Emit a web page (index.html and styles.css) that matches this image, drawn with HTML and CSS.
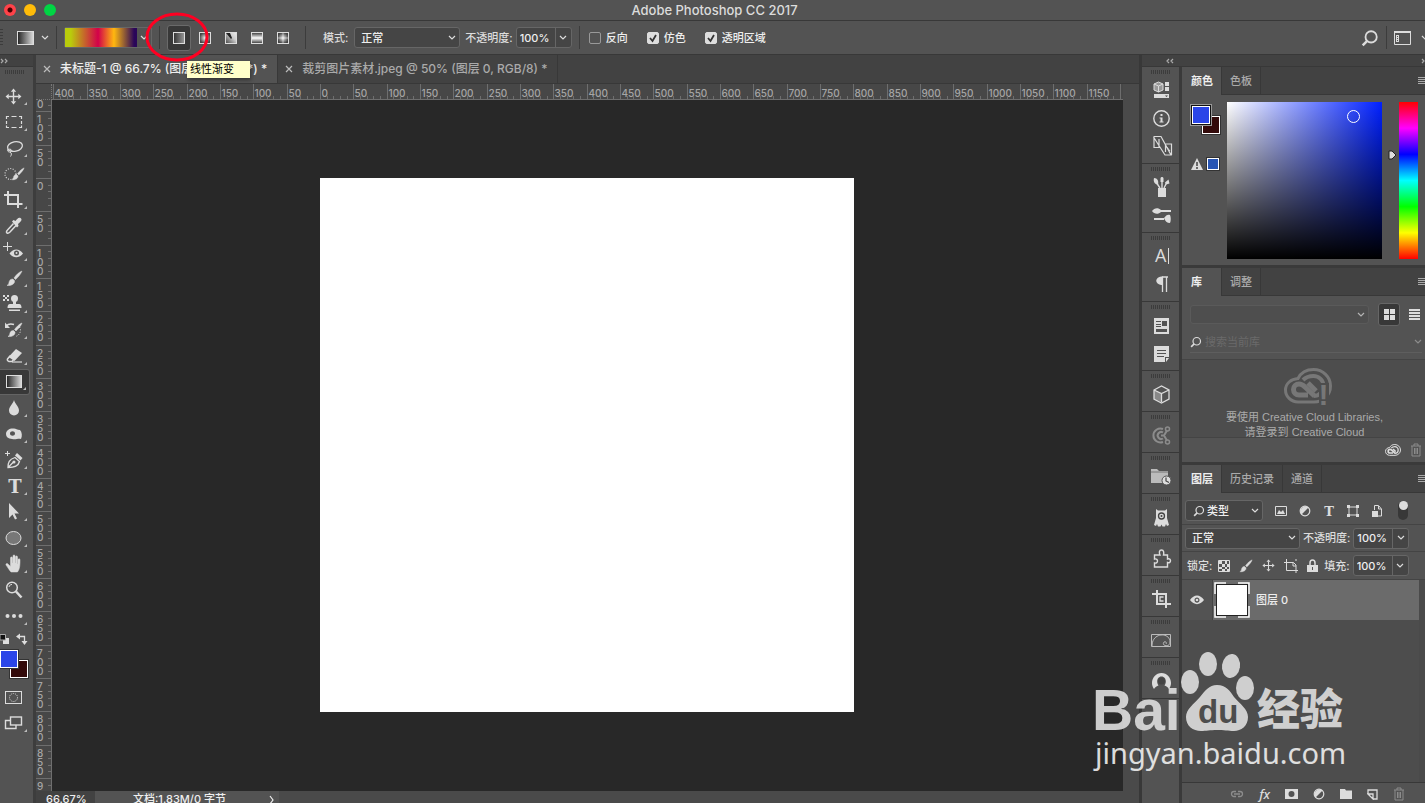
FILE: index.html
```html
<!DOCTYPE html>
<html lang="zh-CN">
<head>
    <meta charset="UTF-8">
    <meta name="viewport" content="width=device-width, initial-scale=1.0">
    <title>Adobe Photoshop CC 2017</title>
    <link rel="stylesheet" href="styles.css">
</head>
<body>
<!-- shared icons -->
<svg class="defs" aria-hidden="true">
    <defs>
        <linearGradient id="g-linear"><stop offset="0" stop-color="#222"/><stop offset="1" stop-color="#ddd"/></linearGradient>
        <linearGradient id="g-type"><stop offset="0" stop-color="#333"/><stop offset="1" stop-color="#999"/></linearGradient>
        <radialGradient id="g-radial"><stop offset="0" stop-color="#eee"/><stop offset="1" stop-color="#444"/></radialGradient>
        <linearGradient id="g-mirror" x2="0" y2="1"><stop offset="0" stop-color="#333"/><stop offset=".5" stop-color="#fff"/><stop offset="1" stop-color="#333"/></linearGradient>
        <linearGradient id="g-angle" x1="0" y1="1" x2="1" y2="0"><stop offset="0" stop-color="#444"/><stop offset=".6" stop-color="#ccc"/><stop offset="1" stop-color="#eee"/></linearGradient>
    </defs>
    <symbol id="chevron" viewBox="0 0 8 6"><path d="M1 1l3 3 3-3" fill="none" stroke="currentColor" stroke-width="1.2"/></symbol>
    <symbol id="search" viewBox="0 0 16 16"><circle cx="9" cy="7" r="5" fill="none" stroke="currentColor" stroke-width="1.6"/><path d="M5.500 10.500L1.500 14.500" stroke="currentColor" stroke-width="2.200"/></symbol>
    <symbol id="menu" viewBox="0 0 10 10"><path d="M0 1.500h10M0 3.500h10M0 5.500h10M0 7.500h10" stroke="currentColor"/></symbol>
    <symbol id="close" viewBox="0 0 8 8"><path d="M1 1l6 6M7 1L1 7" stroke="currentColor" stroke-width="1.200"/></symbol>
    <symbol id="double" viewBox="0 0 8 6"><path d="M1 1l2 2-2 2M5 1l2 2-2 2" fill="none" stroke="currentColor" stroke-width="1.200"/></symbol>
    <symbol id="brush" viewBox="0 0 16 16"><path d="M15 1c-1 3-4 6-6 8L7.500 7.500C9.500 5 12 2 15 1zM6.500 8.500L8 10c.5 3-3 5-7 4.500 2-1 1.500-2 2-3.500.5-1.800 2-2.500 3.500-2.500z" stroke="currentColor" stroke-width=".5"/></symbol>
    <symbol id="move" viewBox="0 0 16 16"><path d="M8 .5l2.500 3H5.500zM8 15.500l2.500-3H5.500zM.5 8l3-2.500v5zM15.500 8l-3-2.500v5z"/><path d="M8 3v10M3 8h10" stroke="currentColor" stroke-width="1.300"/></symbol>
    <symbol id="adjust" viewBox="0 0 12 12"><circle cx="6" cy="6" r="4.800" fill="none" stroke="currentColor" stroke-width="1.200"/><path d="M9.500 2.500A5 5 0 0 0 2.500 9.500z"/></symbol>
    <symbol id="trash" viewBox="0 0 12 14"><path d="M1 3h10M4 3V1h4v2M2 3v10h8V3M4.500 5v6M6 5v6M7.500 5v6" fill="none" stroke="currentColor"/></symbol>
    <symbol id="cloud" viewBox="0 0 48 36"><path d="M14 34C7 34 1.500 28.500 1.500 22S7 11 14 10.500C17 4.500 22 1.500 29.500 1.500 39 1.500 46.500 9 46.500 18S39 34 30 34z" fill="none" stroke="currentColor" stroke-width="3"/><path d="M24 27H15a5.500 5.500 0 0 1 0-11c3 0 4 1 6 3l9.500 9" fill="none" stroke="currentColor" stroke-width="5"/><path d="M19 12c3-3 6-4 10.500-4a10 10 0 0 1 0 20" fill="none" stroke="currentColor" stroke-width="4"/><path d="M24 15l8 8" stroke="currentColor" stroke-width="5"/></symbol>
</svg>

<header class="titlebar">
    <span class="light light-close"></span>
    <span class="light light-min"></span>
    <span class="light light-zoom"></span>
    <h1>Adobe Photoshop CC 2017</h1>
</header>

<section class="options">
    <span class="grip-v"></span>
    <button class="tool-preset" aria-label="渐变工具">
        <svg width="17" height="14" viewBox="0 0 17 14"><rect x=".5" y=".5" width="16" height="13" fill="url(#g-linear)" stroke="#ddd"/></svg>
        <svg class="chev" width="8" height="6"><use href="#chevron"/></svg>
    </button>
    <span class="divider"></span>
    <div class="gradient-picker">
        <button class="gradient-bar" aria-label="编辑渐变"></button>
        <button class="gradient-more" aria-label="渐变列表"><svg width="8" height="6"><use href="#chevron"/></svg></button>
    </div>
    <span class="divider"></span>
    <div class="gradient-types">
        <button class="type active" aria-label="线性渐变"><svg width="12" height="12"><rect x=".5" y=".5" width="11" height="11" fill="url(#g-type)" stroke="#ddd"/></svg></button>
        <button class="type" aria-label="径向渐变"><svg width="12" height="12"><rect x=".5" y=".5" width="11" height="11" fill="url(#g-radial)" stroke="#ddd"/></svg></button>
        <button class="type" aria-label="角度渐变"><svg width="12" height="12"><rect x=".5" y=".5" width="11" height="11" fill="url(#g-angle)" stroke="#ddd"/><path d="M1 1h4l2 5-1 1z" fill="#222"/></svg></button>
        <button class="type" aria-label="对称渐变"><svg width="12" height="12"><rect x=".5" y=".5" width="11" height="11" fill="url(#g-mirror)" stroke="#ddd"/></svg></button>
        <button class="type" aria-label="菱形渐变"><svg width="12" height="12"><rect x=".5" y=".5" width="11" height="11" fill="url(#g-radial)" stroke="#ddd"/><path d="M6 1v10M1 6h10" stroke="#fff" opacity=".5"/></svg></button>
    </div>
    <span class="divider"></span>
    <label for="mode" class="mode-label">模式:</label>
    <select id="mode" class="select mode-select"><option>正常</option></select>
    <label for="opacity">不透明度:</label>
    <span class="combo">
        <input id="opacity" type="text" value="100%">
        <button aria-label="不透明度滑块"><svg width="8" height="6"><use href="#chevron"/></svg></button>
    </span>
    <span class="divider"></span>
    <div class="checks">
        <label class="check"><input type="checkbox">反向</label>
        <label class="check"><input type="checkbox" checked>仿色</label>
        <label class="check"><input type="checkbox" checked>透明区域</label>
    </div>
    <div class="options-end">
        <button aria-label="搜索"><svg width="18" height="18"><use href="#search"/></svg></button>
        <span class="divider"></span>
        <button aria-label="工作区"><svg width="17" height="14" viewBox="0 0 17 14"><path d="M.5 1.500h16v12H.5z" fill="none" stroke="currentColor"/><path d="M0 0h17v2H0zM2 4h3v7H2z"/><path d="M3 5.500h1M3 7.500h1M3 9.500h1" stroke="#535353"/></svg></button>
        <svg class="edge" width="8" height="6"><use href="#chevron"/></svg>
    </div>
    <svg class="highlight" width="64" height="52"><ellipse cx="32" cy="26" rx="30" ry="23" fill="none" stroke="#ff0022" stroke-width="3"/></svg>
    <div class="tooltip" role="tooltip">线性渐变</div>
</section>

<main class="workspace">
    <nav class="toolbar">
        <div class="strip"><svg width="8" height="6"><use href="#double"/></svg></div>
        <span class="grip"></span>
        <button class="tool" aria-label="移动"><svg viewBox="0 0 28 26"><use href="#move" x="5" y="5" width="17" height="17"/></svg></button>
        <button class="tool" aria-label="矩形选框"><svg viewBox="0 0 28 26"><path d="M6.500 10V7.500H9M11.500 7.500h5M19 7.500h2.500V10M21.500 12v3M21.500 16.500v2H19M16.500 18.500h-5M9 18.500H6.500v-2M6.500 15v-3" fill="none" stroke="currentColor" stroke-width="1.200"/></svg></button>
        <button class="tool" aria-label="套索"><svg viewBox="0 0 28 26"><ellipse cx="15" cy="11.500" rx="7.500" ry="4.800" transform="rotate(-12 15 11.500)" fill="none" stroke="currentColor" stroke-width="1.300"/><path d="M8 14c-1 2 .5 3.500 2 3s2.500-1.500 1-2.500-3 0-3 1.500M10 17c2 1 1.500 3 .5 4.500" fill="none" stroke="currentColor"/></svg></button>
        <button class="tool" aria-label="快速选择"><svg viewBox="0 0 28 26"><circle cx="10.500" cy="13" r="5.500" fill="none" stroke="currentColor" stroke-width="1.200" stroke-dasharray="1 1.500"/><use href="#brush" x="11" y="5" width="14" height="16"/></svg></button>
        <button class="tool" aria-label="裁剪"><svg viewBox="0 0 28 26"><path d="M8 4v13h14.500M4 8h14v13" fill="none" stroke="currentColor" stroke-width="2"/></svg></button>
        <button class="tool" aria-label="吸管"><svg viewBox="0 0 28 26"><path d="M13.500 10.500l-6 6.500c-1 1-1.500 2.500-.5 3s2 0 3-1l6-6.500" fill="none" stroke="currentColor" stroke-width="1.500"/><path d="M12 8.500l1.500-1.500 2 1c1-1.500 3-4 5-3 2 1.500 1 3-2.500 6l.5 2-1.500 1.500z"/></svg></button>
        <button class="tool" aria-label="红眼"><svg viewBox="0 0 28 26"><path d="M7.500 3v9M3 7.500h9" stroke="currentColor"/><path d="M9.500 14.500c4-5.500 9.500-5.500 13.500 0-4 5-9.500 5-13.500 0z"/><circle cx="16.500" cy="14" r="2.500" fill="#535353"/><circle cx="16.500" cy="14" r="1"/></svg></button>
        <button class="tool" aria-label="画笔"><svg viewBox="0 0 28 26"><use href="#brush" x="6" y="5" width="17" height="17"/></svg></button>
        <button class="tool" aria-label="图章"><svg viewBox="0 0 28 26"><path d="M3 4h2v2H3zM7 4h2v2H7zM5 6h2v2H5zM3 8h2v2H3zM7 8h2v2H7z"/><circle cx="14.500" cy="7.500" r="3.500"/><path d="M13 9h3v4h3c2 0 2.500 2 2.500 4H7.500c0-2 .5-4 2.500-4h3zM9 18.500h11v1.500H9z"/></svg></button>
        <button class="tool" aria-label="历史记录画笔"><svg viewBox="0 0 28 26"><use href="#brush" x="7" y="5" width="16" height="16"/><path d="M6 9c2-2 5-2.500 8-1.500" fill="none" stroke="currentColor" stroke-width="1.500"/><path d="M5 5.500v5.500h5z"/><path d="M19.500 10c2 3 1 8-4 9.500" fill="none" stroke="currentColor" stroke-dasharray="1 1.500"/></svg></button>
        <button class="tool" aria-label="橡皮擦"><svg viewBox="0 0 28 26"><path d="M16 6l6 4-7.500 8-6-4z"/><path d="M10.500 12.500l-3 3.500c-.5 1 0 2 1.500 2.500h3l2.500-3" fill="none" stroke="currentColor" stroke-width="1.500"/><path d="M12 19h10" stroke="currentColor" stroke-width="1.200"/></svg></button>
        <button class="tool active" aria-label="渐变"><svg viewBox="0 0 28 26"><rect x="6.500" y="6.500" width="15" height="12" fill="url(#g-linear)" stroke="#ddd"/></svg></button>
        <button class="tool" aria-label="模糊"><svg viewBox="0 0 28 26"><path d="M14 5c1 4 5 6.500 5 10.500a5 5 0 0 1-10 0C9 11.500 13 9 14 5z"/></svg></button>
        <button class="tool" aria-label="海绵"><svg viewBox="0 0 28 26"><path fill-rule="evenodd" d="M6 13c0-4 4-6 8-5.500 2 0 3 1.500 6 1.500 2 2 2.500 6 1 9-3-1-5 1-9 0-4-.5-6-2-6-5zm4-.5c0 3 5 3 5 0s-5-3-5 0z"/></svg></button>
        <button class="tool" aria-label="钢笔"><svg viewBox="0 0 28 26"><path d="M7.500 4v5M5 6.500h5" stroke="currentColor"/><path d="M8 20.500c0-5 1-8 7-10l4.500 4c-1 4-5 6-11.500 6zM8.500 20l5-5" fill="none" stroke="currentColor" stroke-width="1.300"/><circle cx="14" cy="15" r="1.500"/><path d="M15 8.500l2-2.500 5.500 5-2 2.500z"/></svg></button>
        <button class="tool" aria-label="文字"><svg viewBox="0 0 28 26"><text x="15" y="20" text-anchor="middle" class="serif" font-size="18">T</text></svg></button>
        <button class="tool" aria-label="路径选择"><svg viewBox="0 0 28 26"><path d="M9 4v15l3.500-3.500 2.500 5 2-1-2.500-5H19z"/></svg></button>
        <button class="tool" aria-label="椭圆"><svg viewBox="0 0 28 26"><ellipse cx="13.500" cy="13" rx="7.500" ry="6.500" fill="#777" stroke="currentColor"/></svg></button>
        <button class="tool" aria-label="抓手"><svg viewBox="0 0 28 26"><path d="M11 21c-2-2-3-4.500-5-7-.5-1.500 1.500-2 2.500-.5l2 2V7c0-1.500 2-1.500 2 0v5h.5V5c0-1.500 2-1.500 2 0v7h.5V6c0-1.500 2-1.500 2 0v7h.5V8.500c.5-1.200 2-1 2 .5 0 4 0 9-2.500 12z" stroke="currentColor" stroke-width=".5"/></svg></button>
        <button class="tool last" aria-label="缩放"><svg viewBox="0 0 28 26"><circle cx="12" cy="10.500" r="5.300" fill="none" stroke="currentColor" stroke-width="1.500"/><path d="M9 10c.5-2 1.500-2.500 3-2.500" fill="none" stroke="currentColor"/><path d="M16 14.500l5.500 6" stroke="currentColor" stroke-width="2.500"/></svg></button>
        <button class="tool" aria-label="编辑工具栏"><svg viewBox="0 0 28 26"><circle cx="7.500" cy="13" r="2"/><circle cx="14" cy="13" r="2"/><circle cx="20.500" cy="13" r="2"/></svg></button>
        <div class="swap-row">
            <button aria-label="默认颜色"><svg width="10" height="12"><path d="M3 5h6v6H3z" fill="#ddd"/><path d="M0 1.500h5.500v5.500H0z" fill="#111" stroke="#aaa"/></svg></button>
            <button aria-label="切换颜色"><svg width="12" height="12"><path d="M3 3.500h5.500V9" fill="none" stroke="#ddd" stroke-width="1.300"/><path d="M0 3.500L4 .5v6zM8.500 12l-3-4h6z" fill="#ddd"/></svg></button>
        </div>
        <div class="colors">
            <button class="swatch back" aria-label="背景色"></button>
            <button class="swatch fore" aria-label="前景色"></button>
        </div>
        <button class="tool last" aria-label="快速蒙版"><svg viewBox="0 0 28 26"><rect x="5.500" y="7.500" width="16" height="12" fill="none" stroke="currentColor"/><circle cx="13.500" cy="13.500" r="4" fill="none" stroke="currentColor" stroke-dasharray="1 1"/></svg></button>
        <button class="tool" aria-label="屏幕模式"><svg viewBox="0 0 28 26"><path d="M10 10.500H5.500v8H16V15" fill="none" stroke="currentColor" stroke-width="1.400"/><rect x="10.500" y="7" width="11" height="8" fill="none" stroke="currentColor" stroke-width="1.400"/></svg></button>
    </nav>

    <section class="document">
        <div class="doc-tabs">
            <div class="doc-tab active"><button aria-label="关闭"><svg width="8" height="8"><use href="#close"/></svg></button><span>未标题-1 @ 66.7% (图层 0, RGB/8*) *</span></div>
            <div class="doc-tab"><button aria-label="关闭"><svg width="8" height="8"><use href="#close"/></svg></button><span>裁剪图片素材.jpeg @ 50% (图层 0, RGB/8) *</span></div>
        </div>
        <div class="doc-view">
            <div class="ruler-corner"></div>
            <svg class="ruler ruler-x" id="ruler-x"></svg>
            <svg class="ruler ruler-y" id="ruler-y"></svg>
            <div class="pasteboard"><div class="artboard"></div></div>
        </div>
        <footer class="status">
            <span class="zoom">66.67%</span>
            <button class="doc-info"><span>文档:1.83M/0 字节</span><svg width="6" height="10"><path d="M1 1l3 4-3 4" fill="none" stroke="currentColor" stroke-width="1.200"/></svg></button>
        </footer>
    </section>

    <aside class="dock">
        <div class="strip dock-strip"><svg class="flip" width="8" height="6"><use href="#double"/></svg><svg width="4" height="6"><path d="M1 1l2 2-2 2" fill="none" stroke="currentColor" stroke-width="1.200"/></svg></div>
        <div class="dock-body">
            <div class="icon-column">
                <div class="icon-group">
                    <span class="grip"></span>
                    <button aria-label="属性"><svg viewBox="0 0 24 24"><path d="M4 6l4.500-2L13 6v6l-4.500 2L4 12z" fill="#999" stroke="currentColor"/><path d="M4 6l4.500 2L13 6M8.500 8v6" fill="none" stroke="currentColor"/><path d="M15 4h4v4h-4zM15 9h4v4h-4zM4 16h15v4H4z"/><path d="M15 17.500h3l-1.500 1.500z" fill="#444"/></svg></button>
                    <button aria-label="信息"><svg viewBox="0 0 24 24"><circle cx="11.500" cy="12.500" r="7.700" fill="none" stroke="currentColor" stroke-width="1.400"/><path d="M10.500 8h2v2h-2zM9.500 11.500h3v4h1v1h-4v-1h1v-3h-1z"/></svg></button>
                    <button aria-label="仿制源"><svg viewBox="0 0 24 24"><path d="M3.500 2.500h7.500l10 18.500h-6L3.500 3M4 3v10.500h5V5M15.500 11v7M14.500 10h7v11" fill="none" stroke="currentColor" stroke-width="1.200"/><path d="M16 12l4 5" stroke="currentColor"/></svg></button>
                </div>
                <div class="icon-group">
                    <span class="grip"></span>
                    <button aria-label="画笔预设"><svg viewBox="0 0 24 24"><path d="M8 13h8v9H8z"/><path d="M10 13L6 7M12 13V7M14 13l3-6" stroke="currentColor" stroke-width="1.400"/><path d="M4 3c3.500 0 5 3 4 7-3-1-5-3-4-7zM10.500 7V3.500c0-2 3-2 3 0V7zM15 7.500L18.500 4.500l1 4-3.500 1z"/></svg></button>
                    <button aria-label="画笔"><svg viewBox="0 0 24 24"><path d="M2 8c2-3 6-4 9-1h10v2H11c-3 3-7 2-9-1zM4 15h10v2H4zM14 15c2-3 4-4 6-3 1 2 1 6 0 8-3 0-5-2-6-5z"/></svg></button>
                </div>
                <div class="icon-group">
                    <span class="grip"></span>
                    <button aria-label="字符"><svg viewBox="0 0 24 24"><text x="5" y="18" class="sans" font-size="18">A</text><path d="M18.500 4v16" stroke="currentColor"/></svg></button>
                    <button aria-label="段落"><svg viewBox="0 0 24 24"><path d="M12 5h6M12.500 5v15M16.500 5v15" stroke="currentColor" stroke-width="1.300"/><path d="M13 4.500v8.500c-9 0-9-8.500 0-8.500z"/></svg></button>
                </div>
                <div class="icon-group">
                    <span class="grip"></span>
                    <button aria-label="样式"><svg viewBox="0 0 24 24"><path fill-rule="evenodd" d="M4 5h15v16H4zM6 8v1h5V8zm0 3v1h5v-1zm0 2v1h5v-1zm6-5v5h5V8zM6 16v3h11v-3z"/></svg></button>
                    <button aria-label="注释"><svg viewBox="0 0 24 24"><path fill-rule="evenodd" d="M4 5h15v11h-4v5H4zM7 9v1h9V9zm0 3v1h9v-1zm0 3v1h7v-1z"/><path d="M16 17h3l-3 4z"/></svg></button>
                </div>
                <div class="icon-group">
                    <span class="grip"></span>
                    <button aria-label="3D"><svg viewBox="0 0 24 24"><path d="M4 8l7.500 3.500V20L4 16.500z" fill="#888"/><path d="M4 8l7.500-4L19 8v9l-7.500 4L4 17zM4 8l7.500 3.500L19 8M11.500 11.500V20" fill="none" stroke="currentColor" stroke-width="1.300"/></svg></button>
                </div>
                <div class="icon-group">
                    <span class="grip"></span>
                    <button class="dim" aria-label="设备预览"><svg viewBox="0 0 24 24"><path d="M13 6a7 7 0 1 0 0 13M13 9.500a3.500 3.500 0 1 0 0 6M11 12.500h3l3-5M14 12.500l3 5" fill="none" stroke="currentColor" stroke-width="2"/><circle cx="17.500" cy="6" r="2" fill="none" stroke="currentColor" stroke-width="1.500"/><circle cx="17.500" cy="19" r="2" fill="none" stroke="currentColor" stroke-width="1.500"/></svg></button>
                </div>
                <div class="icon-group">
                    <span class="grip"></span>
                    <button aria-label="文件"><svg viewBox="0 0 24 24"><path d="M1 5h6l2 2h9v12H1z" fill="#bbb"/><path d="M1 8h17" stroke="#777"/><circle cx="16.500" cy="16.500" r="4.500" fill="#ddd" stroke="#535353"/><path d="M16 13.500V17l3 1.500" fill="none" stroke="#444" stroke-width="1.200"/></svg></button>
                </div>
                <div class="icon-group">
                    <span class="grip"></span>
                    <button aria-label="扩展"><svg viewBox="0 0 24 24"><path d="M6 4l2 1.500h7L17 4v9l2 7-2 1-1-2-1 2.500h-2.500l-1-2-1 2H8L7 19l-1 2-2-1 2-7z"/><circle cx="11.500" cy="11" r="3" fill="none" stroke="#444" stroke-width="1.300"/><circle cx="11.500" cy="11" r="1" fill="#444"/></svg></button>
                </div>
                <div class="icon-group">
                    <span class="grip"></span>
                    <button aria-label="插件"><svg viewBox="0 0 24 24"><path d="M4.500 9H10c-1-2-1-5 1.500-5S14 7 13.500 9h4v4c4-1.500 4 5 0 3.500V21h-13v-4c4 1 4-5 0-4z" fill="none" stroke="currentColor" stroke-width="1.400"/></svg></button>
                </div>
                <div class="icon-group">
                    <span class="grip"></span>
                    <button aria-label="裁切"><svg viewBox="0 0 24 24"><path d="M7 3v14h14M2 7h14v14" fill="none" stroke="currentColor" stroke-width="2"/><path d="M13.500 10H10v4h3.500" fill="none" stroke="currentColor" stroke-width="1.300"/></svg></button>
                </div>
                <div class="icon-group">
                    <span class="grip"></span>
                    <button aria-label="构图"><svg viewBox="0 0 24 24"><path d="M1.500 6.500h19v12h-19zM2 18C2 4 20 4 20 14c0 6-9 4-6 0 2-1 3 1 2 2" fill="none" stroke="#bbb"/></svg></button>
                </div>
                <div class="icon-group">
                    <span class="grip"></span>
                    <button aria-label="用户"><svg viewBox="0 0 24 24"><path fill-rule="evenodd" d="M4 20C-1 13 4 4 11.500 4S24 13 19 20c-1-2-3-3-4.500-3.500 2.500-3 1.500-9-3-9s-5.500 6-3 9C7 17 5 18 4 20z"/><circle cx="11.500" cy="12" r="3.500" fill="#444"/></svg></button>
                </div>
            </div>

            <div class="panels">
                <section class="panel">
                    <div class="tabs"><button class="active">颜色</button><button>色板</button><svg class="menu" width="7" height="10"><use href="#menu" width="10" height="10"/></svg></div>
                    <div class="color-body">
                        <div class="color-side">
                            <div class="colors">
                                <button class="swatch back" aria-label="背景色"></button>
                                <button class="swatch fore" aria-label="前景色"></button>
                            </div>
                            <div class="gamut">
                                <svg width="12" height="12"><path d="M6 0l6 12H0z" fill="#ddd"/><path d="M6 4v4M6 9v2" stroke="#444" stroke-width="1.500"/></svg>
                                <button class="swatch" aria-label="色域内颜色"></button>
                            </div>
                        </div>
                        <div class="color-field"><span class="color-cursor"></span></div>
                        <div class="hue-wrap">
                            <input type="range" class="hue" min="0" max="360" value="120" aria-label="色相">
                            <svg class="hue-arrow" width="9" height="10"><path d="M1 1h3l4 4-4 4H1z" fill="#ddd" stroke="#222"/></svg>
                        </div>
                    </div>
                </section>

                <section class="panel">
                    <div class="tabs"><button class="active">库</button><button>调整</button><svg class="menu" width="7" height="10"><use href="#menu" width="10" height="10"/></svg></div>
                    <div class="lib-head">
                        <select class="select lib-select" aria-label="库" disabled></select>
                        <button class="view active" aria-label="网格"><svg width="11" height="11"><path d="M0 0h5v5H0zM6 0h5v5H6zM0 6h5v5H0zM6 6h5v5H6z"/></svg></button>
                        <button class="view" aria-label="列表"><svg width="11" height="11"><path d="M0 1h11M0 4h11M0 7h11M0 10h11" stroke="currentColor" stroke-width="2"/></svg></button>
                    </div>
                    <div class="lib-search">
                        <svg width="12" height="12"><use href="#search"/></svg>
                        <input type="text" placeholder="搜索当前库" aria-label="搜索当前库">
                        <svg class="dim" width="8" height="6"><use href="#chevron"/></svg>
                    </div>
                    <div class="lib-body">
                        <div class="lib-logo"><svg width="48" height="36"><use href="#cloud"/></svg><b>!</b></div>
                        <p>要使用 Creative Cloud Libraries,<br>请登录到 Creative Cloud</p>
                    </div>
                    <div class="lib-foot">
                        <button aria-label="Creative Cloud"><svg width="16" height="12"><use href="#cloud"/></svg></button>
                        <button class="dim" aria-label="删除"><svg width="12" height="14"><use href="#trash"/></svg></button>
                    </div>
                </section>

                <section class="panel layers">
                    <div class="tabs"><button class="active">图层</button><button>历史记录</button><button>通道</button><svg class="menu" width="7" height="10"><use href="#menu" width="10" height="10"/></svg></div>
                    <div class="layer-row filter-row">
                        <span class="filter-kind">
                            <svg width="12" height="12"><use href="#search"/></svg>
                            <select class="select" aria-label="筛选"><option>类型</option></select>
                        </span>
                        <div class="filters">
                            <button aria-label="像素图层"><svg width="12" height="12"><path d="M.5 1.500h11v9H.5z" fill="none" stroke="currentColor"/><path d="M2 9l2-4 2 2 2-2 2 4z"/></svg></button>
                            <button aria-label="调整图层"><svg width="12" height="12"><use href="#adjust"/></svg></button>
                            <button aria-label="文字图层"><svg width="12" height="12"><text x="6" y="11" text-anchor="middle" class="serif" font-size="13">T</text></svg></button>
                            <button aria-label="形状图层"><svg width="12" height="12"><path d="M2 2h8v8H2z" fill="none" stroke="currentColor"/><path d="M0 0h3v3H0zM9 0h3v3H9zM0 9h3v3H0zM9 9h3v3H9z"/></svg></button>
                            <button aria-label="智能对象"><svg width="12" height="12"><path d="M3.500 5V.5h4L10.500 4v7H7M7.500 1v3H10" fill="none" stroke="currentColor"/><path d="M1 6h6v6H1z"/></svg></button>
                            <button class="switch" aria-label="打开或关闭图层过滤"><i></i></button>
                        </div>
                    </div>
                    <div class="layer-row">
                        <select class="select blend" aria-label="混合模式"><option>正常</option></select>
                        <label for="layer-opacity">不透明度:</label>
                        <span class="combo"><input id="layer-opacity" type="text" value="100%"><button aria-label="不透明度滑块"><svg width="8" height="6"><use href="#chevron"/></svg></button></span>
                    </div>
                    <div class="layer-row lock-row">
                        <span class="lock-label">锁定:</span>
                        <div class="locks">
                            <button aria-label="锁定透明像素"><svg width="12" height="12"><path d="M.5.500h11v11H.5z" fill="none" stroke="currentColor"/><path d="M1 1h3v3H1zM7 1h2v3H7zM4 4h3v3H4zM9 4h2v3H9zM1 7h3v2H1zM7 7h2v2H7zM4 9h3v2H4zM9 9h2v2H9z"/></svg></button>
                            <button aria-label="锁定图像像素"><svg width="14" height="14"><use href="#brush"/></svg></button>
                            <button aria-label="锁定位置"><svg width="13" height="13"><use href="#move"/></svg></button>
                            <button aria-label="锁定画板"><svg width="14" height="14"><path d="M0 3.500h9.500L12 6v5.500H2.500V0M12 14v-2.500h2M12 0v2M9 3.500V7h3" fill="none" stroke="currentColor"/></svg></button>
                            <button aria-label="锁定全部"><svg width="11" height="13"><path d="M3 6V4c0-4 5-4 5 0v2" fill="none" stroke="currentColor" stroke-width="1.500"/><path fill-rule="evenodd" d="M0 6h11v7H0zM5 8v3h1V8z"/></svg></button>
                        </div>
                        <label for="fill">填充:</label>
                        <span class="combo"><input id="fill" type="text" value="100%"><button aria-label="填充滑块"><svg width="8" height="6"><use href="#chevron"/></svg></button></span>
                    </div>
                    <div class="layer-list">
                        <div class="layer">
                            <button class="eye" aria-label="图层可见性"><svg width="14" height="10"><path fill-rule="evenodd" d="M0 5c4-6 10-6 14 0-4 5.500-10 5.500-14 0zm4.500 0c0 3.500 5 3.500 5 0s-5-3.500-5 0z"/><circle cx="7" cy="5" r="1.300"/></svg></button>
                            <div class="layer-main">
                                <span class="thumb"><svg width="36" height="36"><path d="M1 12V1h11M24 1h11v11M35 24v11H24M12 35H1V24" fill="none" stroke="#fff" stroke-width="1.500"/><rect x="2.500" y="2.500" width="31" height="31" fill="#fff" stroke="#222"/></svg></span>
                                <span>图层 0</span>
                            </div>
                        </div>
                    </div>
                    <div class="layer-foot">
                        <button class="dim" aria-label="链接图层"><svg width="14" height="8"><path d="M6 1.500H4a2.500 2.500 0 0 0 0 5h2M8 1.500h2a2.500 2.500 0 0 1 0 5H8M4 4h6" fill="none" stroke="currentColor" stroke-width="1.300"/></svg></button>
                        <button class="fx">fx</button>
                        <button aria-label="添加蒙版"><svg width="13" height="10"><path fill-rule="evenodd" d="M0 0h13v10H0zM6.500 2a3 3 0 1 0 0 6 3 3 0 0 0 0-6z"/></svg></button>
                        <button aria-label="调整"><svg width="12" height="12"><use href="#adjust"/></svg></button>
                        <button aria-label="新建组"><svg width="12" height="10"><path d="M0 0h5l1 1.500h6V10H0z"/></svg></button>
                        <button aria-label="新建图层"><svg width="11" height="11"><path d="M1 5V1h9v9H6M1 5h5v5z" fill="none" stroke="currentColor" stroke-width="1.300"/></svg></button>
                        <button class="dim" aria-label="删除图层"><svg width="12" height="14"><use href="#trash"/></svg></button>
                    </div>
                </section>
            </div>
        </div>
    </aside>
</main>

<svg class="watermark" width="262" height="130">
    <text x="2" y="82" class="wm-bold" font-size="57">Bai</text>
    <ellipse cx="100" cy="34" rx="9" ry="12"/>
    <ellipse cx="118" cy="16" rx="9" ry="12"/>
    <ellipse cx="141" cy="18" rx="9" ry="12" transform="rotate(8 141 18)"/>
    <ellipse cx="155" cy="40" rx="9" ry="12"/>
    <path d="M127 37c9 0 13 6 17 12 6 7 14 12 14 20 0 9-7 14-14 14-6 0-10-1-17-1s-11 1-16 1c-8 0-15-5-15-14 0-8 8-13 14-20 5-6 9-12 17-12z"/>
    <text x="108" y="75" class="wm-bold wm-du" font-size="33">du</text>
    <text x="167" y="77" class="wm-cjk" font-size="43">经验</text>
    <text x="5" y="116" class="wm-url" font-size="29">jingyan.baidu.com</text>
</svg>

<script>
// ruler marks, one label every 50px of the image
const SCALE = 2 / 3;
const NS = 'http://www.w3.org/2000/svg';

function line(svg, x1, y1, x2, y2) {
    const el = document.createElementNS(NS, 'line');
    el.setAttribute('x1', x1);
    el.setAttribute('y1', y1);
    el.setAttribute('x2', x2);
    el.setAttribute('y2', y2);
    svg.appendChild(el);
}

function label(svg, x, y, value) {
    const el = document.createElementNS(NS, 'text');
    el.setAttribute('x', x);
    el.setAttribute('y', y);
    el.textContent = value;
    svg.appendChild(el);
}

function drawRulers() {
    const rx = document.getElementById('ruler-x');
    const ry = document.getElementById('ruler-y');
    const board = document.querySelector('.artboard').getBoundingClientRect();
    const boxX = rx.getBoundingClientRect();
    const boxY = ry.getBoundingClientRect();
    const originX = board.left - boxX.left;
    const originY = board.top - boxY.top;
    rx.innerHTML = '';
    ry.innerHTML = '';

    for (let v = -400; v * SCALE + originX < boxX.width; v += 10) {
        const x = Math.round(originX + v * SCALE) + 0.5;
        line(rx, x, v % 50 ? 12 : 0, x, 16);
        // skip a label that would run off the end
        if (v % 50 === 0 && x + 10 < boxX.width) label(rx, x + 1, 13, Math.abs(v));
    }
    for (let v = -150; v * SCALE + originY < boxY.height; v += 10) {
        const y = Math.round(originY + v * SCALE) + 0.5;
        line(ry, v % 50 ? 12 : 0, y, 16, y);
        if (v % 50 === 0) {
            String(Math.abs(v)).split('').forEach((digit, i) => {
                const base = y + 11 + i * 9;
                if (base > 0 && base < boxY.height + 4) label(ry, 1, base, digit);
            });
        }
    }
}

drawRulers();
window.addEventListener('resize', drawRulers);
</script>
</body>
</html>
```
FILE: styles.css
```css
* {
    box-sizing: border-box;
}

body {
    margin: 0;
    height: 100vh;
    display: flex;
    flex-direction: column;
    overflow: hidden;
    position: relative;
    background: #535353;
    color: #dcdcdc;
    font-family: Inter, "Noto Sans CJK SC", sans-serif;
    font-size: 11px;
    font-weight: 500;
    line-height: 16px;
}

button, input, select {
    font: inherit;
    color: inherit;
    margin: 0;
}

button {
    display: flex;
    align-items: center;
    justify-content: center;
    padding: 0;
    border: none;
    background: none;
    flex: none;
}

svg {
    display: block;
    flex: none;
    fill: currentColor;
}

.defs {
    position: absolute;
    width: 0;
    height: 0;
}

.serif {
    font-family: "DejaVu Serif", serif;
    font-weight: bold;
}

.sans {
    font-family: "Open Sans", sans-serif;
}

.dim {
    color: #8c8c8c;
}

/* title bar */
.titlebar {
    flex: none;
    height: 21px;
    display: flex;
    align-items: center;
    gap: 8px;
    padding-left: 4px;
    border-bottom: 1px solid #383838;
}

.titlebar h1 {
    flex: 1;
    margin: 0 60px 0 0;
    text-align: center;
    font-size: 13px;
    font-weight: 500;
}

.light {
    width: 12px;
    height: 12px;
    border-radius: 50%;
}

.light-close {
    background: radial-gradient(#400 2px, #ff4249 3px);
}

.light-min {
    background: #ffbc09;
}

.light-zoom {
    background: #00d544;
}

/* options bar */
.options {
    position: relative;
    z-index: 2;
    flex: none;
    height: 34px;
    display: flex;
    align-items: center;
    border-bottom: 1px solid #383838;
}

.grip-v {
    width: 3px;
    height: 18px;
    background: repeating-linear-gradient(#3c3c3c 0 1px, transparent 1px 3px);
}

.divider {
    width: 1px;
    height: 23px;
    margin: 0 7px;
    background: #3c3c3c;
}

.tool-preset {
    gap: 7px;
    margin-left: 14px;
}

.gradient-picker {
    display: flex;
    height: 21px;
    border: 1px solid #666;
    border-radius: 2px;
}

.gradient-bar {
    width: 72px;
    background: linear-gradient(to right, #b9cc0c 8%, #d3004a 46%, #ffb80f 68%, #2a0659 96%);
}

.gradient-more {
    width: 14px;
}

.gradient-types {
    display: flex;
    gap: 2px;
    margin-right: 3px;
}

.type {
    width: 24px;
    height: 26px;
    border-radius: 3px;
}

.type.active {
    background: #383838;
    border: 1px solid #6a6a6a;
}

.mode-label {
    margin: 0 6px 0 10px;
}

.select {
    appearance: none;
    height: 21px;
    padding: 0 20px 0 6px;
    border: 1px solid #666;
    border-radius: 3px;
    color: #eee;
    background: #454545 url("data:image/svg+xml,%3Csvg xmlns='http://www.w3.org/2000/svg' width='8' height='6'%3E%3Cpath d='M1 1l3 3 3-3' fill='none' stroke='%23ddd' stroke-width='1.2'/%3E%3C/svg%3E") no-repeat right 3px center;
}

.mode-select {
    width: 106px;
    margin-right: 5px;
}

.combo {
    display: flex;
    height: 21px;
    margin-left: 3px;
    border: 1px solid #666;
    border-radius: 3px;
    background: #454545;
}

.combo input {
    width: 39px;
    padding: 0 0 0 3px;
    border: none;
    border-right: 1px solid #666;
    background: none;
    color: #eee;
}

.combo button {
    width: 15px;
}

.checks {
    display: flex;
    gap: 19px;
    margin-left: 2px;
}

.check {
    display: flex;
    align-items: center;
    gap: 5px;
    color: #eee;
}

.check input {
    appearance: none;
    width: 12px;
    height: 12px;
    border: 1px solid #999;
    border-radius: 2px;
}

.check input:checked {
    border-color: #ddd;
    background: #ddd url("data:image/svg+xml,%3Csvg xmlns='http://www.w3.org/2000/svg' width='10' height='10'%3E%3Cpath d='M2 5l2.500 3L8 2' fill='none' stroke='%23333' stroke-width='1.8'/%3E%3C/svg%3E") no-repeat center;
}

.options-end {
    display: flex;
    align-items: center;
    margin-left: auto;
    margin-right: -4px;
}

.options-end .edge {
    margin-left: 10px;
}

.highlight {
    position: absolute;
    left: 145px;
    top: -10px;
}

.tooltip {
    position: absolute;
    left: 187px;
    top: 40px;
    width: 63px;
    height: 17px;
    padding: 0 3px;
    background: #ffffca;
    color: #000;
    font-weight: 400;
    line-height: 17px;
    box-shadow: 1px 2px 4px rgba(0, 0, 0, 0.4);
}

/* left toolbar */
.workspace {
    flex: 1;
    min-height: 0;
    display: flex;
}

.toolbar {
    flex: none;
    width: 36px;
    border-right: 3px solid #3d3d3d;
    overflow: hidden;
}

.strip {
    display: flex;
    align-items: center;
    height: 12px;
    background: #424242;
    border-bottom: 1px solid #383838;
    color: #aaa;
}

.grip {
    display: block;
    width: 20px;
    height: 4px;
    background: repeating-linear-gradient(to right, #3c3c3c 0 1px, transparent 1px 2px);
}

.toolbar .grip {
    margin: 3px 0 9px 5px;
}

.tool {
    position: relative;
    width: 30px;
    height: 26px;
    justify-content: flex-start;
}

.tool svg {
    width: 28px;
    height: 26px;
}

.tool::after {
    content: "";
    position: absolute;
    right: 3px;
    bottom: 4px;
    border: solid transparent;
    border-width: 3px 0 0 3px;
    border-right: 0;
    border-bottom: 3px solid #bbb;
    border-top: 0;
}

.tool.last::after {
    display: none;
}

.tool.active {
    background: #383838;
    border: 1px solid #646464;
    border-left: none;
    border-radius: 0 3px 3px 0;
}

.swap-row {
    display: flex;
    justify-content: space-between;
    width: 28px;
    margin: 4px 0 5px;
}

.colors {
    position: relative;
    width: 28px;
    height: 29px;
}

.swatch {
    width: 18px;
    height: 18px;
    border: 1px solid #fff;
    outline: 1px solid #333;
}

.fore {
    position: absolute;
    left: 0;
    top: 0;
    background: #2a45e8;
}

.back {
    position: absolute;
    left: 10px;
    top: 10px;
    background: #330a0a;
}

.colors + .tool {
    margin-top: 5px;
}

/* document window */
.document {
    flex: 1;
    min-width: 0;
    display: flex;
    flex-direction: column;
    background: #4a4a4a;
}

.doc-tabs {
    display: flex;
    height: 29px;
    background: #424242;
    border-bottom: 1px solid #383838;
    font-size: 12px;
}

.doc-tab {
    display: flex;
    align-items: center;
    gap: 9px;
    padding: 0 10px 0 7px;
    border-right: 1px solid #383838;
    color: #aaa;
    white-space: nowrap;
}

.doc-tab.active {
    background: #535353;
    color: #eee;
}

.doc-tab svg {
    color: #bbb;
}

.doc-view {
    flex: 1;
    min-height: 0;
    display: grid;
    grid-template: 16px 1fr / 16px 1fr;
    margin-right: 16px;
}

.ruler-corner {
    border-right: 1px dotted #777;
    border-bottom: 1px dotted #777;
}

.ruler {
    width: 100%;
    height: 100%;
    overflow: hidden;
    background: #474747;
    min-height: 0;
}

.ruler line {
    stroke: #6e6e6e;
}

.ruler text {
    font-size: 10px;
    fill: #a5a5a5;
}

.ruler-x {
    border-bottom: 1px solid #6e6e6e;
}

.ruler-y {
    border-right: 1px solid #6e6e6e;
}

.pasteboard {
    display: flex;
    align-items: center;
    justify-content: center;
    padding: 0 1px 1px 0;
    overflow: hidden;
    background: #282828;
}

.artboard {
    flex: none;
    width: 534px;
    height: 534px;
    background: #fff;
}

.status {
    display: flex;
    flex: none;
    height: 12px;
    overflow: hidden;
    color: #eee;
}

.zoom {
    width: 59px;
    padding-left: 10px;
    background: #424242;
}

.doc-info {
    justify-content: space-between;
    align-items: flex-start;
    width: 184px;
    height: 16px;
    padding: 0 4px 0 38px;
    background: #535353;
}

.doc-info svg {
    margin-top: 4px;
}

/* right dock */
.dock {
    flex: none;
    width: 286px;
    display: flex;
    flex-direction: column;
    border-left: 3px solid #383838;
    overflow: hidden;
}

.dock-strip {
    flex: none;
    justify-content: space-between;
    padding-left: 24px;
}

.flip {
    transform: rotate(180deg);
}

.dock-body {
    flex: 1;
    min-height: 0;
    display: flex;
}

.icon-column {
    width: 40px;
    border-right: 3px solid #3a3a3a;
}

.icon-group {
    padding: 3px 0;
    border-bottom: 1px solid #383838;
}

.icon-group .grip {
    margin: 0 0 2px 9px;
}

.icon-group button {
    width: 37px;
    height: 28px;
    padding-left: 2px;
}

.icon-group svg {
    width: 24px;
    height: 24px;
}

.panels {
    flex: 1;
    min-width: 0;
    display: flex;
    flex-direction: column;
}

.panel {
    flex: none;
    border-bottom: 3px solid #3a3a3a;
}

.tabs {
    display: flex;
    align-items: center;
    height: 28px;
    background: #424242;
    border-bottom: 1px solid #383838;
}

.tabs button {
    height: 28px;
    padding: 0 8px;
    border-right: 1px solid #383838;
    color: #aaa;
}

.tabs button.active {
    min-width: 40px;
    justify-content: flex-start;
    padding-left: 9px;
    background: #535353;
    color: #eee;
    font-weight: 700;
}

.menu {
    margin-left: auto;
    color: #aaa;
}

.color-body {
    display: flex;
    padding: 7px 7px 6px 9px;
}

.color-side {
    width: 36px;
    padding-top: 3px;
}

.color-side .fore {
    outline: 1px solid #111;
    box-shadow: 0 0 0 2px #999;
}

.color-side .colors {
    left: 1px;
    top: 1px;
}

.gamut {
    display: flex;
    gap: 4px;
    margin-top: 24px;
}

.gamut .swatch {
    width: 12px;
    height: 12px;
    background: #2855b4;
}

.color-field {
    position: relative;
    flex: 1;
    height: 157px;
    background: linear-gradient(to top, #000, transparent), linear-gradient(to right, #fff, #0020ff);
}

.color-cursor {
    position: absolute;
    left: 120px;
    top: 8px;
    width: 13px;
    height: 13px;
    border: 1px solid #fff;
    border-radius: 50%;
}

.hue-wrap {
    position: relative;
    margin-left: 17px;
}

.hue {
    display: block;
    appearance: none;
    writing-mode: vertical-lr;
    width: 19px;
    height: 157px;
    background: linear-gradient(#f00, #f0f, #00f, #0ff, #0f0, #ff0, #f00);
}

.hue::-webkit-slider-thumb {
    appearance: none;
    width: 19px;
    height: 2px;
    background: transparent;
}

.hue-arrow {
    position: absolute;
    left: -11px;
    top: 48px;
}

/* libraries */
.lib-head {
    display: flex;
    align-items: center;
    gap: 3px;
    padding: 7px 0 0 8px;
}

.lib-select {
    flex: 1;
    height: 19px;
    margin-right: 6px;
    border-color: #5e5e5e;
    background-color: #4d4d4d;
    opacity: 0.7;
}

.view {
    width: 22px;
    height: 23px;
    border-radius: 3px;
}

.view.active {
    background: #383838;
    border: 1px solid #666;
}

.lib-search {
    display: flex;
    align-items: center;
    gap: 3px;
    height: 22px;
    margin: 5px 3px 6px 8px;
    border-bottom: 1px solid #5e5e5e;
}

.lib-search input {
    flex: 1;
    min-width: 0;
    padding: 0;
    border: none;
    background: none;
}

.lib-search input::placeholder {
    color: #6a6a6a;
    font-weight: 400;
}

.lib-body {
    height: 79px;
    overflow: hidden;
    border-top: 1px solid #444;
    border-bottom: 1px solid #444;
    background: #4d4d4d;
    color: #aaa;
    font-family: "Liberation Sans", "Noto Sans CJK SC", sans-serif;
    font-weight: 400;
    text-align: center;
}

.lib-body p {
    margin: 6px 0 0 2px;
    line-height: 15px;
}

.lib-logo {
    position: relative;
    width: 48px;
    margin: 8px auto 0;
    left: 4px;
    color: #777;
}

.lib-logo b {
    position: absolute;
    right: 3px;
    bottom: -3px;
    background: #4d4d4d;
    font-size: 30px;
    line-height: 24px;
}

.lib-foot {
    display: flex;
    align-items: center;
    justify-content: flex-end;
    gap: 9px;
    height: 24px;
    padding-right: 3px;
}

/* layers */
.layers {
    flex: 1;
    min-height: 0;
    display: flex;
    flex-direction: column;
    border-bottom: none;
}

.layers .tabs {
    flex: none;
}

.layer-row {
    display: flex;
    align-items: center;
    flex: none;
    height: 27px;
    padding-left: 3px;
    border-bottom: 1px solid #444;
}

.filter-row {
    height: 32px;
    padding-top: 4px;
}

.lock-row {
    height: 28px;
}

.filter-kind {
    position: relative;
}

.filter-kind .select {
    width: 78px;
    padding-left: 21px;
}

.filter-kind svg {
    position: absolute;
    left: 8px;
    top: 5px;
}

.filters {
    display: flex;
    gap: 12px;
    margin-left: 12px;
}

.switch {
    align-items: flex-start;
    width: 10px;
    height: 19px;
    margin-left: 3px;
    border-radius: 5px;
    background: #383838;
}

.switch i {
    width: 9px;
    height: 9px;
    border-radius: 50%;
    background: #ddd;
}

.blend {
    width: 115px;
    margin-right: 3px;
}

.lock-label {
    margin: 0 6px 0 2px;
}

.locks {
    display: flex;
    align-items: center;
    gap: 9px;
    margin-right: 6px;
}

.layer-list {
    flex: 1;
    min-height: 0;
    background: #4d4d4d;
    border-right: 6px solid #4a4a4a;
}

.layer {
    display: flex;
    height: 40px;
}

.eye {
    width: 31px;
    background: #535353;
    border-right: 1px solid #444;
}

.layer-main {
    flex: 1;
    display: flex;
    align-items: center;
    gap: 6px;
    padding-left: 1px;
    background: #6b6b6b;
    color: #eee;
}

.layer-foot {
    flex: none;
    display: flex;
    align-items: center;
    justify-content: flex-end;
    gap: 15px;
    height: 21px;
    padding: 2px 20px 0 0;
    border-top: 1px solid #383838;
}

.fx {
    font-family: "Noto Sans", sans-serif;
    font-size: 13px;
    font-style: italic;
}

/* watermark over the bottom right corner */
.watermark {
    position: absolute;
    right: 73px;
    bottom: 25px;
    z-index: 3;
    fill: #dedede;
    opacity: 0.9;
}

.wm-bold {
    font-family: "Liberation Sans", sans-serif;
    font-weight: 700;
}

.wm-du {
    fill: #4d4d4d;
}

.wm-cjk {
    font-family: "Noto Sans CJK SC", sans-serif;
    font-weight: 900;
}

.wm-url {
    font-family: "Noto Sans", sans-serif;
    font-weight: 400;
    fill: #efefef;
}
```
